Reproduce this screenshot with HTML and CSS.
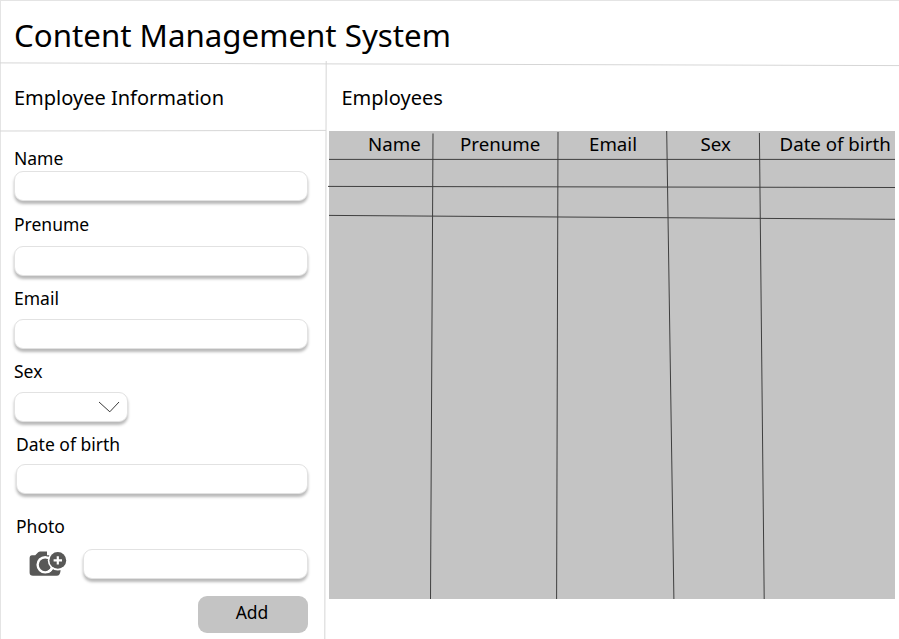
FILE: index.html
```html
<!DOCTYPE html>
<html lang="en">
<head>
<meta charset="utf-8">
<title>Content Management System</title>
<link rel="stylesheet" href="styles.css">
</head>
<body>
<div class="app">
  <header class="topbar"><h1>Content Management System</h1></header>
  <main class="main">
    <section class="sidebar">
      <h2 class="panel-title">Employee Information</h2>
      <form class="form">
        <div class="field name"><label for="name">Name</label><input id="name" type="text"></div>
        <div class="field prenume"><label for="prenume">Prenume</label><input id="prenume" type="text"></div>
        <div class="field email"><label for="email">Email</label><input id="email" type="text"></div>
        <div class="field sex">
          <label for="sex">Sex</label>
          <button class="select" id="sex" type="button">
            <svg width="22" height="12" viewBox="0 0 22 12"><path d="M1 1 11.8 10.8 21 1" fill="none" stroke="#222" stroke-width=".9"/></svg>
          </button>
        </div>
        <div class="field birth"><label for="birth">Date of birth</label><input id="birth" type="text"></div>
        <div class="field photo">
          <label for="photo">Photo</label>
          <div class="upload">
            <svg class="camera" width="40" height="30" viewBox="0 0 40 30">
              <path d="M5 6.3H8.2L11.2 3.2Q12 2.4 13.2 2.4H20V6.3H30V18L33.6 20.5Q33.6 26.8 29.5 26.8H6Q2.6 26.8 2.6 23.6V9.5Q2.6 6.3 5 6.3Z" fill="#585857"/>
              <circle cx="18.2" cy="15.8" r="7.6" fill="none" stroke="#fff" stroke-width="2.4"/>
              <circle cx="30.8" cy="11.4" r="10" fill="#fff"/>
              <path d="M25.6 17.2A7.6 7.6 0 0 1 21 22.8" fill="none" stroke="#fff" stroke-width="2.4"/>
              <circle cx="30.8" cy="11.4" r="8.4" fill="#585857"/>
              <path d="M30.8 7.2V15.6M26.6 11.4H35" stroke="#fff" stroke-width="2.2"/>
            </svg>
            <input id="photo" type="text">
          </div>
        </div>
        <button class="add" type="button">Add</button>
      </form>
    </section>
    <section class="content">
      <h2 class="panel-title">Employees</h2>
      <div class="table">
        <div class="table-head">
          <span>Name</span><span>Prenume</span><span>Email</span><span>Sex</span><span>Date of birth</span>
        </div>
      </div>
    </section>
  </main>
  <svg class="rules" width="899" height="639" viewBox="0 0 899 639" fill="none">
    <g stroke="#d6d6d6">
      <path d="M0 .5H899M.5 0V639" stroke="#e4e4e4"/>
      <path d="M0 62.9 899 65.6M0 131 195 130.7 326 130.4M326.2 61 324.8 639"/>
    </g>
    <g stroke="#3f3f3f">
      <path d="M329 159.4H895M328 186.4 895 187.5M329 215.4 895 219.3"/>
      <path d="M433 133.5 430.5 599M558 132 556.6 599M666.7 131 673.9 599M759.4 133 764.2 599"/>
    </g>
  </svg>
</div>
</body>
</html>
```

FILE: styles.css
```css
* { box-sizing: border-box; }

body {
  margin: 0;
  background: #fff;
  color: #000;
  font: 17.5px/20px "Noto Sans", sans-serif;
}

.app {
  position: relative;
  width: 899px;
  height: 639px;
  overflow: hidden;
}

.topbar {
  height: 64px;
  padding: 14px 14px 0;
}

h1 {
  margin: 0;
  font-size: 31.25px;
  font-weight: 400;
  line-height: 42px;
}

.main {
  display: grid;
  grid-template-columns: 326px 1fr;
}

.panel-title {
  margin: 0;
  height: 67px;
  padding: 21px 0 0 14px;
  font-size: 20px;
  font-weight: 400;
  line-height: 26px;
}

.content .panel-title { padding-left: 15.5px; }

.form {
  display: flex;
  flex-direction: column;
  padding: 17px 18.5px 0 13.5px;
}

.field {
  display: flex;
  flex-direction: column;
}

.field label { padding-left: .5px; }

input,
.select {
  width: 100%;
  height: 30px;
  margin: 0;
  padding: 0 8px;
  border: 1px solid #e2e2e2;
  border-radius: 9px;
  background: #fff;
  box-shadow: 0 3px 3px rgba(0, 0, 0, .28);
  font: inherit;
}

.name { gap: 3.4px; }
.prenume { gap: 12px; margin-top: 12.6px; }
.email { gap: 10.7px; margin-top: 12px; }
.sex { gap: 11.3px; margin-top: 12.3px; }
.birth { gap: 10.5px; margin: 11.7px 0 0 2px; }
.photo { gap: 13px; margin: 21.5px 0 0 2px; }

.select {
  display: flex;
  justify-content: flex-end;
  align-items: center;
  width: 114px;
  padding: 0 6.5px;
}

.upload {
  display: flex;
  gap: 16px;
}

.camera {
  flex: none;
  margin-left: 11px;
}

.add {
  align-self: flex-end;
  width: 110px;
  height: 37px;
  margin-top: 17px;
  padding: 0 1px 4px 0;
  border: 0;
  border-radius: 9px;
  background: #c4c4c4;
  color: #000;
  font: inherit;
}

.table {
  width: 566px;
  height: 468px;
  margin-left: 3px;
  background: #c4c4c4;
}

.table-head {
  display: grid;
  grid-template-columns: 92px 129px 111.5px 79px auto;
  padding: 3px 0 0 39px;
  font-size: 18.7px;
  white-space: nowrap;
}

.rules {
  position: absolute;
  inset: 0;
  pointer-events: none;
}
```
